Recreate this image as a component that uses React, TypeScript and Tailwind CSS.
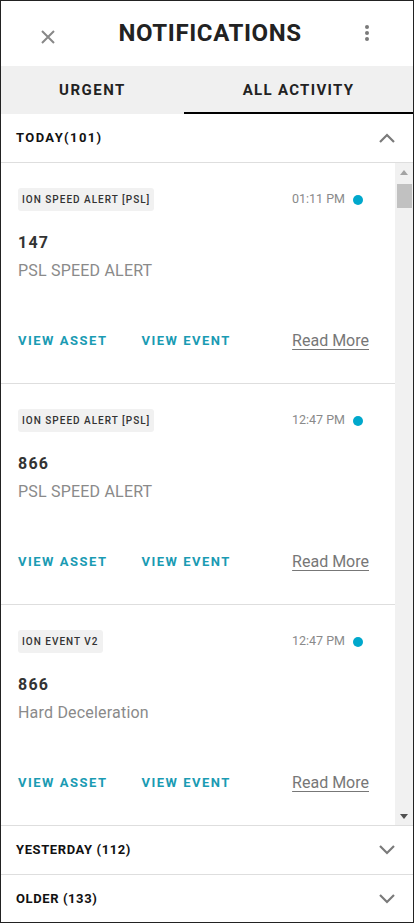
import React from "react";

const font = { fontFamily: "Roboto, 'Noto Sans', Arial, sans-serif" };

function Chevron({ up }: { up?: boolean }) {
  return (
    <svg width="18" height="12" viewBox="0 0 18 12" fill="none">
      {up ? (
        <path d="M2 10 L9 3 L16 10" stroke="#7a7a7a" strokeWidth="2.2" />
      ) : (
        <path d="M2 2 L9 9 L16 2" stroke="#7a7a7a" strokeWidth="2.2" />
      )}
    </svg>
  );
}

type Item = { tag: string; time: string; num: string; desc: string };

const items: Item[] = [
  { tag: "ION SPEED ALERT [PSL]", time: "01:11 PM", num: "147", desc: "PSL SPEED ALERT" },
  { tag: "ION SPEED ALERT [PSL]", time: "12:47 PM", num: "866", desc: "PSL SPEED ALERT" },
  { tag: "ION EVENT V2", time: "12:47 PM", num: "866", desc: "Hard Deceleration" },
];

function Card({ it }: { it: Item }) {
  return (
    <div className="h-[221px] shrink-0 border-b border-[#dedede] pl-[17px] pr-[26px] pt-[25px]">
      <div className="flex items-center justify-between pr-[6px]">
        <div className="h-[23px] rounded-[3px] bg-[#f1f1f1] px-[4px] flex items-center text-[10px] font-medium tracking-[1px] text-[#333]">
          {it.tag}
        </div>
        <div className="flex items-center gap-[8px]">
          <span className="text-[12.5px] text-[#8a8a8a]">{it.time}</span>
          <span className="w-[10px] h-[10px] rounded-full bg-[#00a8cc]" />
        </div>
      </div>
      <div className="mt-[22px] h-[20px] leading-[20px] text-[16px] font-bold tracking-[1.2px] text-[#333]">
        {it.num}
      </div>
      <div className="mt-[8px] h-[20px] leading-[20px] text-[16px] tracking-[0.2px] text-[#8a8a8a]">{it.desc}</div>
      <div className="mt-[50px] h-[20px] flex items-center">
        <span className="text-[13px] font-bold tracking-[1.5px] text-[#1a9bb3]">VIEW ASSET</span>
        <span className="ml-[34px] text-[13px] font-bold tracking-[1.5px] text-[#1a9bb3]">VIEW EVENT</span>
        <span className="ml-auto text-[16px] text-[#777] underline underline-offset-[3px]">Read More</span>
      </div>
    </div>
  );
}

export default function App() {
  return (
    <div
      style={font}
      className="w-[414px] h-[923px] border border-[#222] bg-white flex flex-col overflow-hidden box-border"
    >
      {/* header */}
      <div className="h-[65px] shrink-0 flex items-center relative pb-[2px]">
        <div className="w-[97px] flex justify-center pt-[8px] pr-[4px]">
          <svg width="16" height="16" viewBox="0 0 16 16">
            <path d="M2 2 L14 14 M14 2 L2 14" stroke="#888" strokeWidth="2" />
          </svg>
        </div>
        <div className="flex-1 text-center text-[24px] font-bold tracking-[0.6px] text-[#222] leading-none">
          NOTIFICATIONS
        </div>
        <div className="w-[91px] flex justify-center pr-[1px]">
          <svg width="6" height="18" viewBox="0 0 6 18">
            <circle cx="3" cy="3" r="2" fill="#7a7a7a" />
            <circle cx="3" cy="9" r="2" fill="#7a7a7a" />
            <circle cx="3" cy="15" r="2" fill="#7a7a7a" />
          </svg>
        </div>
      </div>

      {/* tabs */}
      <div className="h-[48px] shrink-0 flex bg-[#f0f0f0]">
        <div className="w-[183px] flex items-center justify-center text-[15px] font-bold tracking-[1.5px] text-[#222]">
          URGENT
        </div>
        <div className="flex-1 flex items-center justify-center text-[15px] font-bold tracking-[1.3px] text-[#222] border-b-2 border-black pt-[2px]">
          ALL ACTIVITY
        </div>
      </div>

      {/* today header */}
      <div className="h-[49px] shrink-0 border-b border-[#dedede] flex items-center pl-[15px] pr-[17px]">
        <span className="text-[13px] font-bold tracking-[1.4px] text-[#111]">TODAY(101)</span>
        <span className="ml-auto">
          <Chevron up />
        </span>
      </div>

      {/* list */}
      <div className="h-[662px] shrink-0 flex overflow-hidden">
        <div className="flex-1 flex flex-col overflow-hidden">
          {items.map((it, i) => (
            <Card key={i} it={it} />
          ))}
        </div>
        <div className="w-[18px] shrink-0 bg-[#f1f1f1] flex flex-col items-center">
          <div className="h-[18px] flex items-center justify-center">
            <svg width="8" height="5" viewBox="0 0 8 5">
              <path d="M0 5 L4 0 L8 5 Z" fill="#a3a3a3" />
            </svg>
          </div>
          <div className="mt-[3px] w-[15px] h-[24px] bg-[#c1c1c1]" />
          <div className="flex-1" />
          <div className="h-[18px] flex items-center justify-center">
            <svg width="8" height="5" viewBox="0 0 8 5">
              <path d="M0 0 L4 5 L8 0 Z" fill="#505050" />
            </svg>
          </div>
        </div>
      </div>

      {/* yesterday */}
      <div className="h-[49px] shrink-0 border-t border-[#dedede] flex items-center pl-[15px] pr-[17px]">
        <span className="text-[13px] font-bold tracking-[0.6px] text-[#111]">YESTERDAY (112)</span>
        <span className="ml-auto">
          <Chevron />
        </span>
      </div>
      <div className="flex-1 border-t border-[#dedede] flex items-center pl-[15px] pr-[17px]">
        <span className="text-[13px] font-bold tracking-[0.6px] text-[#111]">OLDER (133)</span>
        <span className="ml-auto">
          <Chevron />
        </span>
      </div>
    </div>
  );
}
